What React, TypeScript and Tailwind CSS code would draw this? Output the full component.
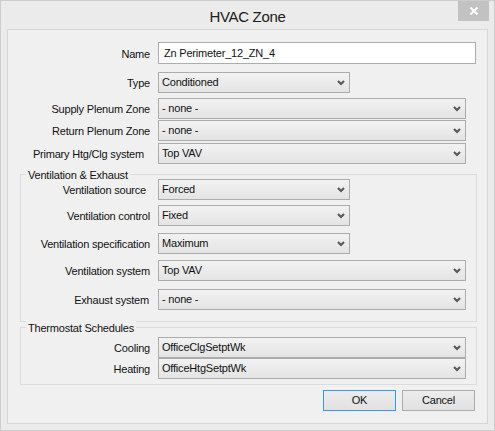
import { clsx } from "clsx";
import type { ReactNode } from "react";

function Chevron() {
  return (
    <svg width="8" height="6" viewBox="0 0 8 6" className="shrink-0">
      <path d="M1 1 L4 4 L7 1" fill="none" stroke="#5a5a5a" strokeWidth="2.2" />
    </svg>
  );
}

function Combo({ value, width }: { value: string; width: string }) {
  return (
    <div
      className={clsx(
        "flex h-[21px] items-center justify-between border border-[#acacac] bg-linear-to-b from-[#f2f2f2] to-[#e4e4e4] pl-[3px] pr-[4px]",
        width
      )}
    >
      <span>{value}</span>
      <Chevron />
    </div>
  );
}

function Field({
  label,
  labelWidth,
  labelPad,
  className,
  children,
}: {
  label: string;
  labelWidth: string;
  labelPad?: string;
  className?: string;
  children: ReactNode;
}) {
  return (
    <div className={clsx("flex items-center", className)}>
      <span className={clsx("shrink-0 pt-[2px] text-right", labelWidth, labelPad)}>{label}</span>
      <div className="ml-2">{children}</div>
    </div>
  );
}

function Group({ title, className, children }: { title: string; className?: string; children: ReactNode }) {
  return (
    <div className={clsx("relative ml-[12px] w-[457px] border border-[#dcdcdc]", className)}>
      <span className="absolute -top-[7px] left-[5px] bg-[#f0f0f0] px-[2px] leading-[14px]">{title}</span>
      {children}
    </div>
  );
}

export default function App() {
  return (
    <div className="h-[431px] w-[495px] border border-[#cdcdcd] bg-[#ebebeb] font-['Liberation_Sans',Arial,sans-serif] text-[11px] tracking-[-0.2px] text-[#111]">
      {/* title bar */}
      <div className="relative h-[28px]">
        <div className="pt-[7px] text-center text-[15px] leading-[18px] tracking-[-0.3px] text-[#202020]">HVAC Zone</div>
        <div className="absolute right-[5px] top-0 flex h-[20px] w-[31px] items-center justify-center bg-[#c2c2c2]">
          <svg width="10" height="8" viewBox="0 0 10 8">
            <path d="M1.5 0.5 L8.5 7.5 M8.5 0.5 L1.5 7.5" stroke="#fff" strokeWidth="2" />
          </svg>
        </div>
      </div>

      {/* client area */}
      <div className="ml-[6px] h-[395px] w-[481px] border border-[#d6d6d6] bg-[#f0f0f0] pt-[12px]">
        <Field label="Name" labelWidth="w-[142px]" className="h-[22px]">
          <div className="flex h-[22px] w-[318px] items-center border border-[#abadb3] bg-white pl-[5px]">
            Zn Perimeter_12_ZN_4
          </div>
        </Field>
        <Field label="Type" labelWidth="w-[142px]" className="mt-[8px]">
          <Combo value="Conditioned" width="w-[192px]" />
        </Field>
        <Field label="Supply Plenum Zone" labelWidth="w-[142px]" className="mt-[5px]">
          <Combo value="- none -" width="w-[308px]" />
        </Field>
        <Field label="Return Plenum Zone" labelWidth="w-[142px]" className="mt-[1px]">
          <Combo value="- none -" width="w-[308px]" />
        </Field>
        <Field label="Primary Htg/Clg system" labelWidth="w-[142px]" labelPad="pr-[6px]" className="mt-[2px]">
          <Combo value="Top VAV" width="w-[308px]" />
        </Field>

        <Group title="Ventilation & Exhaust" className="mt-[10px] pb-[11px] pt-[4px]">
          <Field label="Ventilation source" labelWidth="w-[129px]" labelPad="pr-[4px]">
            <Combo value="Forced" width="w-[192px]" />
          </Field>
          <Field label="Ventilation control" labelWidth="w-[129px]" className="mt-[5px]">
            <Combo value="Fixed" width="w-[192px]" />
          </Field>
          <Field label="Ventilation specification" labelWidth="w-[129px]" className="mt-[7px]">
            <Combo value="Maximum" width="w-[192px]" />
          </Field>
          <Field label="Ventilation system" labelWidth="w-[129px]" className="mt-[6px]">
            <Combo value="Top VAV" width="w-[308px]" />
          </Field>
          <Field label="Exhaust system" labelWidth="w-[129px]" labelPad="pr-[1px]" className="mt-[8px]">
            <Combo value="- none -" width="w-[308px]" />
          </Field>
        </Group>

        <Group title="Thermostat Schedules" className="mt-[5px] pb-[5px] pt-[9px]">
          <Field label="Cooling" labelWidth="w-[129px]">
            <Combo value="OfficeClgSetptWk" width="w-[308px]" />
          </Field>
          <Field label="Heating" labelWidth="w-[129px]">
            <Combo value="OfficeHtgSetptWk" width="w-[308px]" />
          </Field>
        </Group>

        <div className="mt-[5px] flex justify-end gap-[6px] pr-[12px]">
          <button className="h-[21px] w-[73px] border border-[#3399ff] bg-linear-to-b from-[#ececec] to-[#e2e2e2]">OK</button>
          <button className="h-[21px] w-[73px] border border-[#acacac] bg-linear-to-b from-[#ececec] to-[#e2e2e2]">Cancel</button>
        </div>
      </div>
    </div>
  );
}
